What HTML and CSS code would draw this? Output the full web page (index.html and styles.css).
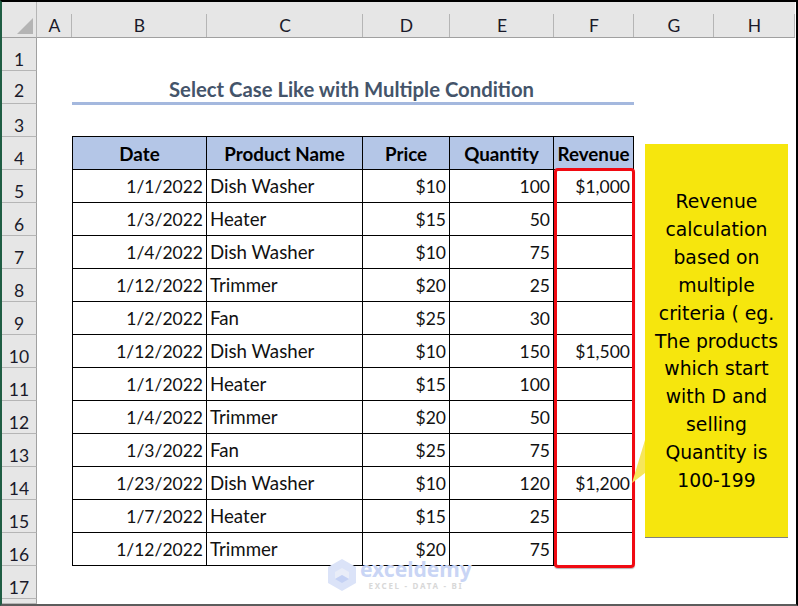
FILE: index.html
```html
<!DOCTYPE html>
<html lang="en">
<head>
<meta charset="utf-8">
<title>Select Case Like with Multiple Condition</title>
<link rel="stylesheet" href="styles.css">
</head>
<body>
<main class="window">
  <div class="sheet">
    <div class="corner"><svg class="corner-mark" width="16" height="16" viewBox="0 0 16 16"><path d="M16 0V16H0Z"/></svg></div>
    <div class="colhead">A</div><div class="colhead">B</div><div class="colhead">C</div><div class="colhead">D</div><div class="colhead">E</div><div class="colhead">F</div><div class="colhead">G</div><div class="colhead">H</div>

    <div class="rowhead">1</div>
    <div class="rowhead rowhead-title">2</div>
    <div class="title">Select Case Like with Multiple Condition</div>
    <div class="rowhead">3</div>
    <div class="table-top"></div>

    <div class="rowhead">4</div>
    <div class="cell th first">Date</div><div class="cell th">Product Name</div><div class="cell th">Price</div><div class="cell th">Quantity</div><div class="cell th">Revenue</div>

    <div class="rowhead">5</div>
    <div class="cell num first">1/1/2022</div><div class="cell">Dish Washer</div><div class="cell num">$10</div><div class="cell num">100</div><div class="cell num">$1,000</div>
    <div class="rowhead">6</div>
    <div class="cell num first">1/3/2022</div><div class="cell">Heater</div><div class="cell num">$15</div><div class="cell num">50</div><div class="cell num"></div>
    <div class="rowhead">7</div>
    <div class="cell num first">1/4/2022</div><div class="cell">Dish Washer</div><div class="cell num">$10</div><div class="cell num">75</div><div class="cell num"></div>
    <div class="rowhead">8</div>
    <div class="cell num first">1/12/2022</div><div class="cell">Trimmer</div><div class="cell num">$20</div><div class="cell num">25</div><div class="cell num"></div>
    <div class="rowhead">9</div>
    <div class="cell num first">1/2/2022</div><div class="cell">Fan</div><div class="cell num">$25</div><div class="cell num">30</div><div class="cell num"></div>
    <div class="rowhead">10</div>
    <div class="cell num first">1/12/2022</div><div class="cell">Dish Washer</div><div class="cell num">$10</div><div class="cell num">150</div><div class="cell num">$1,500</div>
    <div class="rowhead">11</div>
    <div class="cell num first">1/1/2022</div><div class="cell">Heater</div><div class="cell num">$15</div><div class="cell num">100</div><div class="cell num"></div>
    <div class="rowhead">12</div>
    <div class="cell num first">1/4/2022</div><div class="cell">Trimmer</div><div class="cell num">$20</div><div class="cell num">50</div><div class="cell num"></div>
    <div class="rowhead">13</div>
    <div class="cell num first">1/3/2022</div><div class="cell">Fan</div><div class="cell num">$25</div><div class="cell num">75</div><div class="cell num"></div>
    <div class="rowhead">14</div>
    <div class="cell num first">1/23/2022</div><div class="cell">Dish Washer</div><div class="cell num">$10</div><div class="cell num">120</div><div class="cell num">$1,200</div>
    <div class="rowhead">15</div>
    <div class="cell num first">1/7/2022</div><div class="cell">Heater</div><div class="cell num">$15</div><div class="cell num">25</div><div class="cell num"></div>
    <div class="rowhead">16</div>
    <div class="cell num first">1/12/2022</div><div class="cell">Trimmer</div><div class="cell num">$20</div><div class="cell num">75</div><div class="cell num"></div>
    <div class="rowhead">17</div>
    <div class="rowhead"></div>
  </div>

  <div class="highlight"></div>

  <svg class="tail" width="15" height="46" viewBox="0 0 15 46"><path d="M14 0V33L1 43Z"/></svg>
  <div class="callout">Revenue<br>calculation<br>based on<br>multiple<br>criteria ( eg.<br>The products<br>which start<br>with D and<br>selling<br>Quantity is<br>100-199</div>

  <div class="watermark">
    <svg class="wm-logo" width="28" height="32" viewBox="0 0 28 32">
      <path class="wm-a" d="M14 0L28 8V24L14 32L0 24V8Z"/>
      <path class="wm-b" d="M14 9L21 13V20L14 16L7 20V13Z"/>
      <path class="wm-c" d="M14 16L21 20L14 24L7 20Z"/>
    </svg>
    <div class="wm-text">
      <span class="wm-name">exceldemy</span>
      <span class="wm-sub">EXCEL - DATA - BI</span>
    </div>
  </div>
</main>
</body>
</html>
```
FILE: styles.css
```css
* { box-sizing: border-box; }

html, body {
  margin: 0;
  padding: 0;
  background: #fff;
}

.window {
  position: relative;
  width: 798px;
  height: 606px;
  overflow: hidden;
  background: #fff;
  border-style: solid;
  border-width: 2px;
  border-color: #000 #000 #5c5c5c #1f5d43;
  font-family: "Lato", "Liberation Sans", sans-serif;
  font-size: 17.5px;
  color: #111;
}

.sheet {
  display: grid;
  grid-template-columns: 35px 35px 135px 156px 87px 104px 80px 80px 81px;
  grid-template-rows: 36px repeat(17, 33px) 5px;
}

.corner {
  grid-column: 1;
  background: #e6e6e6;
  border-bottom: 1px solid #a0a0a0;
  border-right: 1px solid #b5b5b5;
  display: flex;
  align-items: flex-end;
  justify-content: flex-end;
  padding: 0 3px 3px 0;
}

.corner-mark { display: block; fill: #b4b4b4; }

.colhead {
  display: flex;
  align-items: flex-end;
  justify-content: center;
  line-height: 22px;
  background-color: #e6e6e6;
  background-image: linear-gradient(#b5b5b5, #b5b5b5);
  background-repeat: no-repeat;
  background-position: right bottom;
  background-size: 1px 23px;
  border-bottom: 1px solid #a0a0a0;
  color: #1a1a2a;
}

.rowhead {
  grid-column: 1;
  display: flex;
  align-items: flex-end;
  justify-content: center;
  padding-bottom: 1px;
  line-height: 18px;
  background: #e6e6e6;
  border-right: 1px solid #a0a0a0;
  border-bottom: 1px solid #b5b5b5;
  color: #1a1a2a;
}

.rowhead-title { padding-bottom: 3px; }

.title {
  grid-column: 3 / 8;
  height: 34px;
  display: flex;
  align-items: flex-end;
  justify-content: center;
  padding-right: 3px;
  line-height: 26px;
  font-size: 20.3px;
  font-weight: 700;
  color: #44546a;
  border-bottom: 3px solid #a4b8de;
}

.table-top {
  grid-column: 3 / 8;
  border-bottom: 1px solid #000;
}

.cell {
  display: flex;
  align-items: flex-end;
  padding: 0 3px 3px 3px;
  line-height: 26px;
  font-size: 18.7px;
  white-space: nowrap;
  border-right: 1px solid #000;
  border-bottom: 1px solid #000;
}

.first {
  grid-column: 3;
  border-left: 1px solid #000;
}

.num {
  justify-content: flex-end;
  padding-bottom: 2px;
  font-size: 17.5px;
}

.th {
  justify-content: center;
  padding-bottom: 2px;
  font-weight: 700;
  font-size: 18.8px;
  background: #b4c6e7;
  color: #000;
}

.highlight {
  position: absolute;
  left: 552px;
  top: 166px;
  width: 81px;
  height: 400px;
  border: 3px solid #f00a12;
  border-radius: 4px;
  box-shadow: 0 1px 1px rgba(0, 0, 0, 0.3);
}

.callout {
  position: absolute;
  left: 643px;
  top: 142px;
  width: 143px;
  height: 394px;
  display: flex;
  align-items: center;
  justify-content: center;
  padding-top: 2px;
  text-align: center;
  line-height: 27.9px;
  font-family: "DejaVu Sans", sans-serif;
  font-size: 18.8px;
  color: #000;
  background: #f6e60d;
  border-bottom: 1px solid #808080;
}

.tail {
  position: absolute;
  left: 629px;
  top: 438px;
  fill: #f6e65a;
}

.watermark {
  position: absolute;
  left: 326px;
  top: 557px;
  display: flex;
  gap: 4px;
  align-items: flex-start;
}

.wm-logo { display: block; }
.wm-a { fill: #dbe3f8; }
.wm-b { fill: #e9edf8; }
.wm-c { fill: #c4d1f4; }

.wm-text {
  display: flex;
  flex-direction: column;
  align-items: center;
}

.wm-name {
  font-family: "Noto Sans", sans-serif;
  font-weight: 700;
  font-size: 21px;
  line-height: 21px;
  color: #c9d5f5;
}

.wm-sub {
  font-family: "Noto Sans", sans-serif;
  font-weight: 700;
  font-size: 8px;
  line-height: 11px;
  letter-spacing: 1.7px;
  color: #d8d8d8;
}
```
